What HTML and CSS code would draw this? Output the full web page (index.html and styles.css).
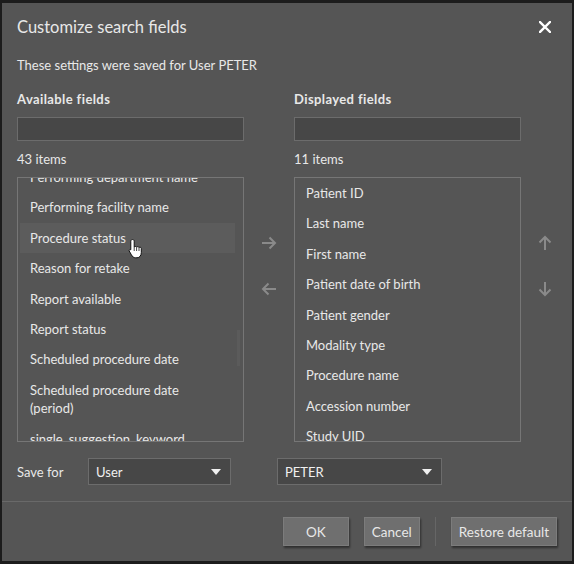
FILE: index.html
```html
<!DOCTYPE html>
<html lang="en">
<head>
  <meta charset="UTF-8" />
  <title>Customize search fields</title>
  <link rel="stylesheet" href="styles.css">
</head>
<body>
  <div class="dialog">
    <div class="dialog-header">
      <h1>Customize search fields</h1>
      <button class="close-btn" aria-label="Close">
        <svg width="12" height="12" viewBox="0 0 12 12"><path d="M1 1 L11 11 M11 1 L1 11" stroke="#fff" stroke-width="2.4" stroke-linecap="square"/></svg>
      </button>
    </div>

    <div class="dialog-body">
      <p class="saved-note">These settings were saved for User PETER</p>

      <div class="columns">
        <div class="field-col">
          <h2>Available fields</h2>
          <input type="text" class="filter" />
          <div class="count">43 items</div>
          <div class="list list-available">
            <ul>
              <li>Performing department name</li>
              <li>Performing facility name</li>
              <li class="hover">Procedure status</li>
              <li>Reason for retake</li>
              <li>Report available</li>
              <li>Report status</li>
              <li>Scheduled procedure date</li>
              <li>Scheduled procedure date (period)</li>
              <li>single_suggestion_keyword</li>
            </ul>
            <div class="scroll-thumb"></div>
            <svg class="cursor" width="16" height="22" viewBox="0 0 16 22">
              <path d="M4.5 1.5 C5.6 1.5 6.2 2.2 6.2 3.2 L6.2 9 C6.6 8.3 8.3 8.2 8.6 9.2 C9 8.5 10.6 8.4 11 9.6 C11.5 9 13.2 9.1 13.3 10.4 L13.3 14.5 C13.3 17.5 11.6 19.8 9 19.8 L7.6 19.8 C5.6 19.8 4.6 18.8 3.4 16.8 L1.2 13 C0.7 12.1 1.8 11 2.8 11.8 L2.8 3.2 C2.8 2.2 3.4 1.5 4.5 1.5 Z" fill="#fff" stroke="#111" stroke-width="1"/>
              <path d="M8.6 9.4 V13 M11 9.8 V13 M6.2 9 V13" stroke="#111" stroke-width="0.8"/>
            </svg>
          </div>
        </div>

        <div class="move-btns">
          <svg width="16" height="14" viewBox="0 0 16 14"><path d="M1 7 H14 M8.5 1.5 L14 7 L8.5 12.5" fill="none" stroke="#8a8a8a" stroke-width="2"/></svg>
          <svg width="16" height="14" viewBox="0 0 16 14"><path d="M15 7 H2 M7.5 1.5 L2 7 L7.5 12.5" fill="none" stroke="#8a8a8a" stroke-width="2"/></svg>
        </div>

        <div class="field-col">
          <h2>Displayed fields</h2>
          <input type="text" class="filter" />
          <div class="count">11 items</div>
          <div class="list list-displayed">
            <ul>
              <li>Patient ID</li>
              <li>Last name</li>
              <li>First name</li>
              <li>Patient date of birth</li>
              <li>Patient gender</li>
              <li>Modality type</li>
              <li>Procedure name</li>
              <li>Accession number</li>
              <li>Study UID</li>
            </ul>
          </div>
        </div>

        <div class="order-btns">
          <svg width="14" height="16" viewBox="0 0 14 16"><path d="M7 15 V2 M1.5 7.5 L7 2 L12.5 7.5" fill="none" stroke="#8a8a8a" stroke-width="2"/></svg>
          <svg width="14" height="16" viewBox="0 0 14 16"><path d="M7 1 V14 M1.5 8.5 L7 14 L12.5 8.5" fill="none" stroke="#8a8a8a" stroke-width="2"/></svg>
        </div>
      </div>

      <div class="save-row">
        <span class="save-label">Save for</span>
        <div class="select select-scope"><span class="select-value">User</span><span class="caret"></span></div>
        <div class="select select-user"><span class="select-value">PETER</span><span class="caret"></span></div>
      </div>
    </div>

    <div class="dialog-footer">
      <button class="btn btn-ok">OK</button>
      <button class="btn">Cancel</button>
      <span class="footer-sep"></span>
      <button class="btn">Restore default</button>
    </div>
  </div>
</body>
</html>
```

FILE: styles.css
```css
:root {
  --dialog-bg: #555555;
  --field-bg: #474747;
  --field-border: #6c6c6c;
  --list-border: #767676;
  --text: #e8e8e8;
}

* {
  box-sizing: border-box;
  margin: 0;
  padding: 0;
}

body {
  font-family: 'Segoe UI', Lato, sans-serif;
  background: #1c1c1c;
  color: var(--text);
  padding: 3px 2px;
  font-size: 13px;
  line-height: 18px;
}

.dialog {
  background: var(--dialog-bg);
  height: 558px;
  display: flex;
  flex-direction: column;
}

.dialog-header {
  display: flex;
  justify-content: space-between;
  align-items: center;
  padding: 13px 21px 0 15px;
}

.dialog-header h1 {
  font-size: 16.5px;
  font-weight: normal;
  line-height: 22px;
}

.close-btn {
  background: none;
  border: none;
  width: 12px;
  height: 12px;
  display: flex;
}

.dialog-body {
  padding: 0 0 0 15px;
  flex: 1;
}

.saved-note {
  margin-top: 18px;
}

.columns {
  display: grid;
  grid-template-columns: 227px 50px 227px 1fr;
  margin-top: 16px;
}

.field-col h2 {
  font-size: 13px;
  font-weight: bold;
  line-height: 18px;
  letter-spacing: 0.4px;
}

.filter {
  display: block;
  width: 100%;
  height: 24px;
  margin-top: 9px;
  background: var(--field-bg);
  border: 1px solid var(--field-border);
  color: var(--text);
  font: inherit;
  padding: 0 6px;
}

.count {
  margin-top: 9px;
}

.list {
  position: relative;
  margin-top: 9px;
  height: 265px;
  border: 1px solid var(--list-border);
  overflow: hidden;
}

.list ul {
  list-style: none;
}

.list li {
  padding: 6px 11px;
  line-height: 18.4px;
}

.list-available ul {
  margin-top: -16px;
  padding-right: 8px;
}

.list-available li {
  padding: 6px 30px 6px 10px;
  margin-left: 2px;
}

.list-available li.hover {
  background: #5c5c5c;
}

.scroll-thumb {
  position: absolute;
  right: 3px;
  top: 152px;
  width: 3px;
  height: 36px;
  background: #5b5b5b;
}

.cursor {
  position: absolute;
  left: 110px;
  top: 60px;
}

.move-btns,
.order-btns {
  display: flex;
  flex-direction: column;
  align-items: center;
  gap: 32px;
  padding-top: 146px;
}

.order-btns {
  align-items: flex-start;
  padding-left: 17px;
  gap: 30px;
  padding-top: 145px;
}

.save-row {
  display: flex;
  align-items: center;
  margin-top: 16px;
  height: 27px;
}

.save-label {
  width: 71px;
  flex-shrink: 0;
}

.select {
  position: relative;
  height: 27px;
  background: var(--field-bg);
  border: 1px solid var(--field-border);
  padding: 0 24px 0 7px;
  display: flex;
  align-items: center;
  color: #f0f0f0;
}

.select-scope {
  width: 143px;
}

.select-user {
  width: 165px;
  margin-left: 46px;
}

.caret {
  position: absolute;
  right: 9px;
  top: 10px;
  width: 0;
  height: 0;
  border-left: 5px solid transparent;
  border-right: 5px solid transparent;
  border-top: 6px solid #f0f0f0;
}

.dialog-footer {
  border-top: 1px solid #696969;
  display: flex;
  justify-content: flex-end;
  align-items: center;
  gap: 15px;
  padding: 15px;
}

.btn {
  height: 29px;
  background: #6f6f6f;
  border: 1px solid #7c7c7c;
  color: var(--text);
  font: inherit;
  font-size: 13.5px;
  padding: 0 7px;
  box-shadow: 1px 2px 2px rgba(0, 0, 0, 0.45);
}

.btn-ok {
  width: 66px;
}

.footer-sep {
  width: 1px;
  height: 29px;
  background: #666;
}
```
